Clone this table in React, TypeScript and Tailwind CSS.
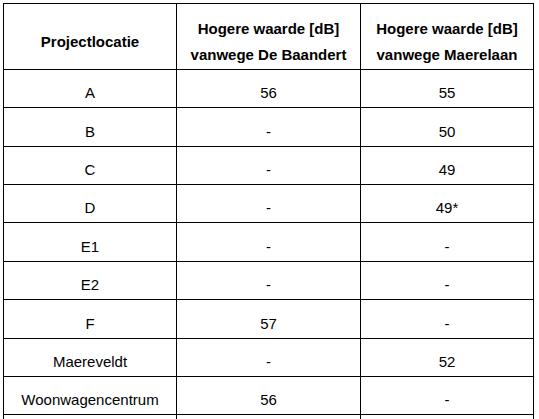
import React from "react";

const rows: { loc: string; baandert: string; maerelaan: string; h: string }[] = [
  { loc: "A", baandert: "56", maerelaan: "55", h: "h-[38px]" },
  { loc: "B", baandert: "-", maerelaan: "50", h: "h-[39px]" },
  { loc: "C", baandert: "-", maerelaan: "49", h: "h-[38px]" },
  { loc: "D", baandert: "-", maerelaan: "49*", h: "h-[38px]" },
  { loc: "E1", baandert: "-", maerelaan: "-", h: "h-[39px]" },
  { loc: "E2", baandert: "-", maerelaan: "-", h: "h-[38px]" },
  { loc: "F", baandert: "57", maerelaan: "-", h: "h-[39px]" },
  { loc: "Maereveldt", baandert: "-", maerelaan: "52", h: "h-[38px]" },
  { loc: "Woonwagencentrum", baandert: "56", maerelaan: "-", h: "h-[38px]" },
  { loc: "", baandert: "", maerelaan: "", h: "h-[38px]" },
];

const cell = "flex items-center justify-center border-r border-b border-black pt-[9px]";

const App = () => {
  return (
    <div className="w-[539px] h-[419px] overflow-hidden bg-white pl-[3px] pt-[3px] font-['Liberation_Sans',Arial,sans-serif] text-[15px] text-black">
      <div className="w-[531px] border-l border-t border-black">
        <div className="grid grid-cols-[173px_184px_173px] h-[66px] font-bold leading-[26px] text-center">
          <div className={cell + " pt-[11px]"}>Projectlocatie</div>
          <div className={cell + " pt-[11px]"}>
            Hogere waarde [dB]
            <br />
            vanwege De Baandert
          </div>
          <div className={cell + " pt-[11px]"}>
            Hogere waarde [dB]
            <br />
            vanwege Maerelaan
          </div>
        </div>
        {rows.map((r, i) => (
          <div key={i} className={"grid grid-cols-[173px_184px_173px] leading-[18px] " + r.h}>
            <div className={cell}>{r.loc}</div>
            <div className={cell}>{r.baandert}</div>
            <div className={cell}>{r.maerelaan}</div>
          </div>
        ))}
      </div>
    </div>
  );
};

export default App;
